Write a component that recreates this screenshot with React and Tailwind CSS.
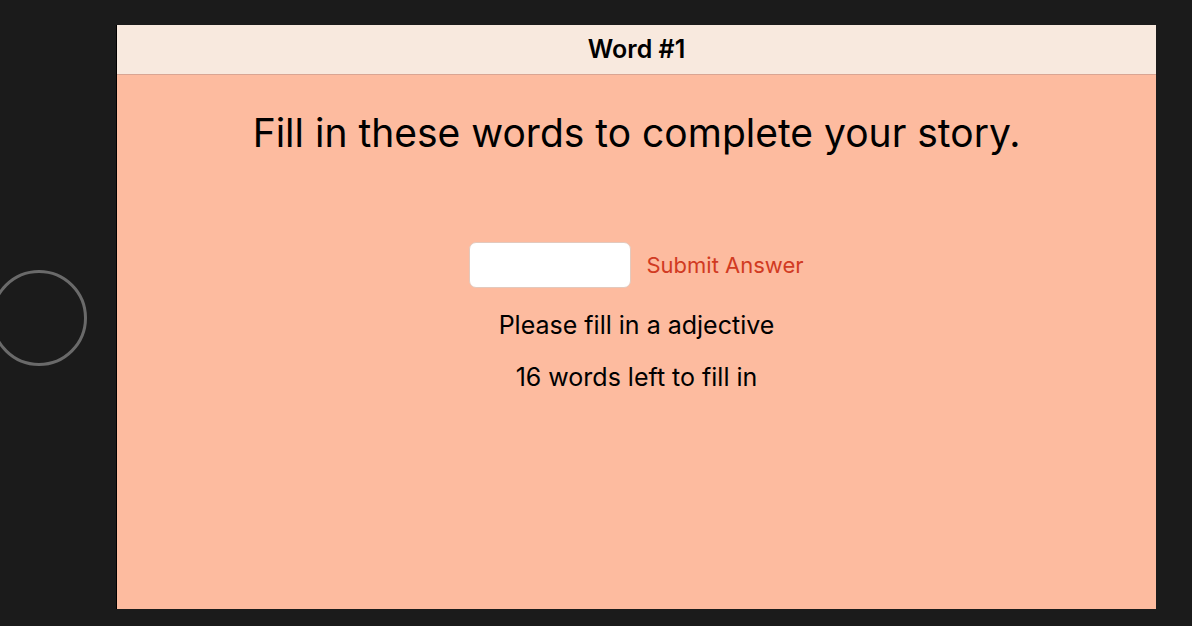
export default function App() {
  return (
    <div className="relative h-[626px] w-[1192px] overflow-hidden bg-[#1b1b1b] pt-[25px] pl-[116px] font-['Inter',sans-serif]">
      {/* home button ring on the device bezel */}
      <div className="absolute left-[-9px] top-[270px] h-[96px] w-[96px] rounded-full border-[3px] border-[#6a6a6a]" />

      <div className="flex h-[584px] w-[1040px] flex-col border-l border-black bg-[#fdbb9f]">
        <header className="flex h-[50px] items-center justify-center border-b border-[#d9a593] bg-[#f8e9de]">
          <span className="text-[25px] font-semibold text-black">Word #1</span>
        </header>

        <main className="flex flex-col items-center">
          <h1 className="mt-[34px] text-[39px] leading-[48px] text-black">
            Fill in these words to complete your story.
          </h1>

          <div className="mt-[85px] flex items-center gap-[15px]">
            <input
              type="text"
              className="h-[46px] w-[162px] rounded-[7px] border border-[#e3c9bd] bg-white px-2 outline-none"
            />
            <button type="button" className="text-[22px] text-[#d13a22]">
              Submit Answer
            </button>
          </div>

          <p className="mt-[22px] text-[25px] leading-[30px] text-black">
            Please fill in a adjective
          </p>
          <p className="mt-[22px] text-[25px] leading-[30px] text-black">
            16 words left to fill in
          </p>
        </main>
      </div>
    </div>
  );
}
